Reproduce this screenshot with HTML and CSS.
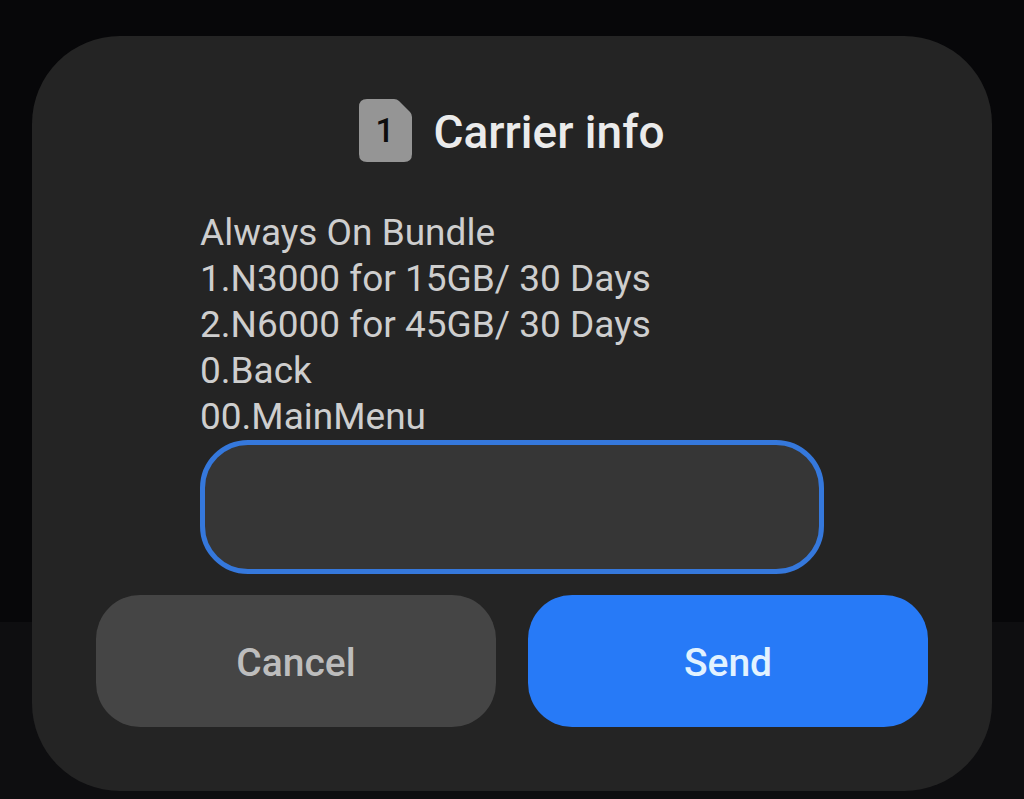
FILE: index.html
```html
<!DOCTYPE html>
<html lang="en">
<head>
  <meta charset="UTF-8">
  <meta name="viewport" content="width=device-width, initial-scale=1.0">
  <title>Carrier info</title>
  <link rel="stylesheet" href="styles.css">
</head>
<body>
  <main class="dialog" role="dialog" aria-labelledby="dialogTitle">
    <header class="dialog-header">
      <svg class="sim-icon" viewBox="0 0 54 64" role="img" aria-label="SIM 1">
        <path class="sim-card" d="M8 0H35Q38 0 40 2L51 13Q53 15 53 18V55Q53 63 45 63H8Q0 63 0 55V8Q0 0 8 0Z"/>
        <text class="sim-number" x="26" y="43">1</text>
      </svg>
      <h1 id="dialogTitle">Carrier info</h1>
    </header>

    <form>
      <div class="dialog-body">
        <label for="reply" class="message">Always On Bundle<br>
          1.N3000 for 15GB/ 30 Days<br>
          2.N6000 for 45GB/ 30 Days<br>
          0.Back<br>
          00.MainMenu</label>
        <input type="text" id="reply" class="reply" autocomplete="off">
      </div>
      <div class="button-group">
        <button type="button" class="secondary">Cancel</button>
        <button type="button" class="primary">Send</button>
      </div>
    </form>
  </main>
</body>
</html>
```
FILE: styles.css
```css
:root {
  --bg-page: #070709;
  --bg-page-low: #0e0e10;
  --bg-dialog: #242424;
  --input-bg: #363636;
  --input-border: #3578dc;
  --text-primary: #ebebeb;
  --text-secondary: #cecece;
  --highlight: #277af7;
}

* {
  box-sizing: border-box;
}

body {
  margin: 0;
  min-height: 100vh;
  padding: 36px 32px 8px;
  background: linear-gradient(var(--bg-page) 622px, var(--bg-page-low) 622px);
  font-family: Roboto, "Liberation Sans", sans-serif;
}

.dialog {
  padding: 63px 64px 64px;
  border-radius: 88px;
  background-color: var(--bg-dialog);
}

.dialog-header {
  display: flex;
  align-items: flex-start;
  justify-content: center;
  gap: 20px;
  margin-bottom: 44px;
}

.sim-icon {
  width: 54px;
  height: 64px;
}

.sim-card {
  fill: #959595;
}

.sim-number {
  fill: #0c0c0c;
  font-size: 33px;
  font-weight: 500;
  text-anchor: middle;
}

h1 {
  margin: 0;
  color: var(--text-primary);
  font-size: 46px;
  font-weight: 500;
  line-height: 67px;
}

.dialog-body {
  padding: 0 104px;
}

.message {
  display: block;
  color: var(--text-secondary);
  font-size: 37px;
  line-height: 46px;
}

.reply {
  display: block;
  width: 100%;
  height: 134px;
  padding: 0 40px;
  border: 5px solid var(--input-border);
  border-radius: 48px;
  outline: none;
  background-color: var(--input-bg);
  color: var(--text-primary);
  font: inherit;
  font-size: 37px;
}

.button-group {
  display: grid;
  grid-template-columns: 1fr 1fr;
  gap: 32px;
  margin-top: 21px;
}

button {
  height: 132px;
  padding: 4px 16px 0;
  border: none;
  border-radius: 44px;
  font-family: inherit;
  font-size: 39px;
  font-weight: 500;
  cursor: pointer;
}

button.primary {
  background-color: var(--highlight);
  color: #e2f2ff;
}

button.secondary {
  background-color: #454545;
  color: #bdbdbd;
}
```
